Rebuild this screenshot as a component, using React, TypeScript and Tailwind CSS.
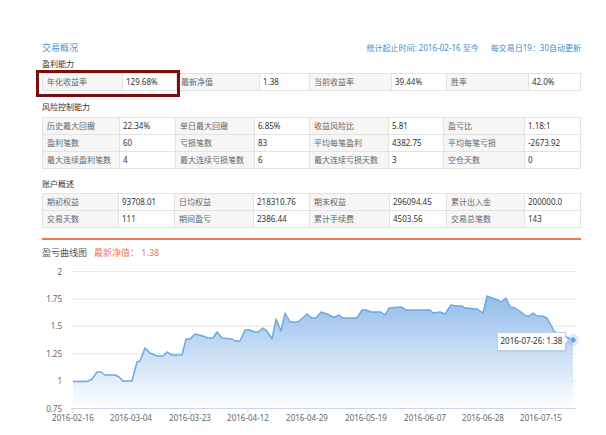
import React from "react";

type Cell = [string, string];

const profit: Cell[] = [
  ["年化收益率", "129.68%"],
  ["最新净值", "1.38"],
  ["当前收益率", "39.44%"],
  ["胜率", "42.0%"],
];

const risk: Cell[][] = [
  [
    ["历史最大回撤", "22.34%"],
    ["单日最大回撤", "6.85%"],
    ["收益风险比", "5.81"],
    ["盈亏比", "1.18:1"],
  ],
  [
    ["盈利笔数", "60"],
    ["亏损笔数", "83"],
    ["平均每笔盈利", "4382.75"],
    ["平均每笔亏损", "-2673.92"],
  ],
  [
    ["最大连续盈利笔数", "4"],
    ["最大连续亏损笔数", "6"],
    ["最大连续亏损天数", "3"],
    ["空仓天数", "0"],
  ],
];

const account: Cell[][] = [
  [
    ["期初权益", "93708.01"],
    ["日均权益", "218310.76"],
    ["期末权益", "296094.45"],
    ["累计出入金", "200000.0"],
  ],
  [
    ["交易天数", "111"],
    ["期间盈亏", "2386.44"],
    ["累计手续费", "4503.56"],
    ["交易总笔数", "143"],
  ],
];

// traced curve, page coordinates
const pts: [number, number][] = [
  [73, 382.5], [87, 382.5], [92, 380], [97, 373], [101, 373], [105, 376], [115, 376],
  [119, 378], [123, 382], [132, 382], [137, 363], [140, 362], [145, 349], [150, 354],
  [157, 357], [163, 357], [167, 353], [172, 356], [182, 356], [186, 340], [190, 340],
  [195, 335], [203, 337], [208, 339], [213, 339], [217, 333], [222, 339], [232, 340],
  [235, 342], [240, 342], [245, 331], [250, 331], [255, 333], [258, 333], [263, 329],
  [267, 332], [272, 340], [276, 320], [281, 332], [285, 314], [290, 323], [298, 323],
  [307, 315], [312, 319], [316, 319], [321, 313], [327, 315], [333, 318], [335, 318],
  [339, 316], [343, 319], [357, 319], [362, 311], [366, 311], [371, 313], [381, 313],
  [385, 316], [389, 309], [401, 308], [406, 311], [430, 311], [433, 314], [440, 313],
  [445, 315], [451, 306], [456, 307], [462, 307], [465, 309], [477, 310], [483, 314],
  [487, 297], [492, 299], [498, 301], [501, 303], [506, 299], [510, 308], [515, 309],
  [521, 313], [526, 317], [529, 317], [533, 314], [537, 317], [542, 317], [547, 319],
  [554, 332], [560, 336], [566, 338], [573, 341],
];

const yTicks = [
  { v: "2", y: 272.7 },
  { v: "1.75", y: 300 },
  { v: "1.5", y: 327.3 },
  { v: "1.25", y: 354.7 },
  { v: "1", y: 382 },
  { v: "0.75", y: 409.5 },
];

const xTicks = [
  { x: 73, l: "2016-02-16" },
  { x: 131, l: "2016-03-04" },
  { x: 190, l: "2016-03-23" },
  { x: 248, l: "2016-04-12" },
  { x: 307, l: "2016-04-29" },
  { x: 366, l: "2016-05-19" },
  { x: 425, l: "2016-06-07" },
  { x: 483, l: "2016-06-28" },
  { x: 541, l: "2016-07-15" },
];

function Table({ rows, cols }: { rows: Cell[][]; cols: string }) {
  return (
    <div className={`grid border-l border-t border-[#e3e3e3] text-[8px] ${cols}`}>
      {rows.flat().map(([k, v], i) => (
        <React.Fragment key={i}>
          <div className="h-[17px] flex items-center pl-[4px] bg-[#f6f6f6] text-[#666] border-r border-b border-[#e3e3e3] whitespace-nowrap">
            {k}
          </div>
          <div className="h-[17px] flex items-center pl-[3px] bg-white text-[#333] border-r border-b border-[#e3e3e3] whitespace-nowrap">
            {v}
          </div>
        </React.Fragment>
      ))}
    </div>
  );
}

function Chart() {
  const line = pts.map(([x, y]) => `${x},${y}`).join(" ");
  const area = `73,409.5 ${line} 573,409.5`;
  const font = "'Noto Sans', 'Noto Sans CJK SC', sans-serif";
  return (
    <svg width={540} height={175} viewBox="42 260 540 175" className="block">
      <defs>
        <linearGradient id="fillPnl" x1="0" y1="0" x2="0" y2="1">
          <stop offset="0%" stopColor="#7fb1e7" />
          <stop offset="100%" stopColor="#ffffff" />
        </linearGradient>
      </defs>
      {yTicks.slice(0, 5).map((t) => (
        <line key={t.v} x1={71} x2={576} y1={t.y} y2={t.y} stroke="#e6e6e6" strokeWidth={1} />
      ))}
      <polygon points={area} fill="url(#fillPnl)" fillOpacity={0.85} />
      <polyline points={line} fill="none" stroke="#6fa8e2" strokeWidth={1.5} strokeLinejoin="round" />
      <line x1={71} x2={576} y1={409.5} y2={409.5} stroke="#ccd6eb" strokeWidth={1} />
      {xTicks.map((t) => (
        <g key={t.l}>
          <line x1={t.x} x2={t.x} y1={409.5} y2={414} stroke="#ccd6eb" strokeWidth={1} />
          <text x={t.x} y={422} textAnchor="middle" fontSize={8} fill="#666" fontFamily={font}>
            {t.l}
          </text>
        </g>
      ))}
      {yTicks.map((t) => (
        <text key={t.v} x={62} y={t.y + 3} textAnchor="end" fontSize={8} fill="#666" fontFamily={font}>
          {t.v}
        </text>
      ))}
      {/* tooltip */}
      <g>
        <path
          d="M497.5 333.5 H565.5 V338 L569 341 L565.5 344 V351.5 H497.5 Z"
          fill="#000"
          opacity={0.06}
          transform="translate(1.5 1.5)"
        />
        <path
          d="M497.5 333.5 H565.5 V338 L569 341 L565.5 344 V351.5 H497.5 Z"
          fill="#ffffff"
          fillOpacity={0.95}
          stroke="#b9cfe8"
          strokeWidth={1}
        />
        <text x={500.5} y={345} fontSize={8} fill="#333" fontFamily={font}>
          2016-07-26: 1.38
        </text>
      </g>
      <circle cx={573} cy={341} r={6} fill="#7cb5ec" opacity={0.25} />
      <circle cx={573} cy={341} r={3} fill="#5fa2e6" stroke="#fff" strokeWidth={0.5} />
    </svg>
  );
}

export default function App() {
  return (
    <div className="w-[606px] h-[435px] overflow-hidden bg-white font-['Noto_Sans','Noto_Sans_CJK_SC',sans-serif]">
      <div className="ml-[42px] w-[539px] pt-[42px]">
        <div className="flex items-center justify-between h-[12px]">
          <span className="text-[9px] text-[#4b97d4]">交易概况</span>
          <div className="flex gap-[12px] text-[8px] text-[#3d8dcf]">
            <span>统计起止时间: 2016-02-16 至今</span>
            <span>每交易日19：30自动更新</span>
          </div>
        </div>

        <div className="mt-[4px] h-[12px] flex items-center text-[8px] text-[#333]">盈利能力</div>
        <div className="relative mt-[3px]">
          <Table rows={[profit]} cols="grid-cols-[80px_54px_83px_50px_82px_55px_82px_52px]" />
          <div className="absolute left-[-6px] top-[-3px] w-[144px] h-[27px] border-[3px] border-[#7a0d0d]" />
        </div>

        <div className="mt-[10px] h-[12px] flex items-center text-[8px] text-[#333]">风险控制能力</div>
        <div className="mt-[4px]">
          <Table rows={risk} cols="grid-cols-[77px_56px_79px_55px_79px_55px_81px_56px]" />
        </div>

        <div className="mt-[9px] h-[12px] flex items-center text-[8px] text-[#333]">账户概述</div>
        <div className="mt-[3px]">
          <Table rows={account} cols="grid-cols-[76px_56px_79px_56px_80px_57px_78px_56px]" />
        </div>

        <div className="mt-[10px] h-[2px] bg-[#f3735a]" />

        <div className="mt-[7px] h-[12px] flex items-center gap-[7px] text-[9px]">
          <span className="text-[#555]">盈亏曲线图</span>
          <span className="text-[#f0735a]">最新净值： 1.38</span>
        </div>
      </div>
      <div className="ml-[42px]">
        <Chart />
      </div>
    </div>
  );
}
